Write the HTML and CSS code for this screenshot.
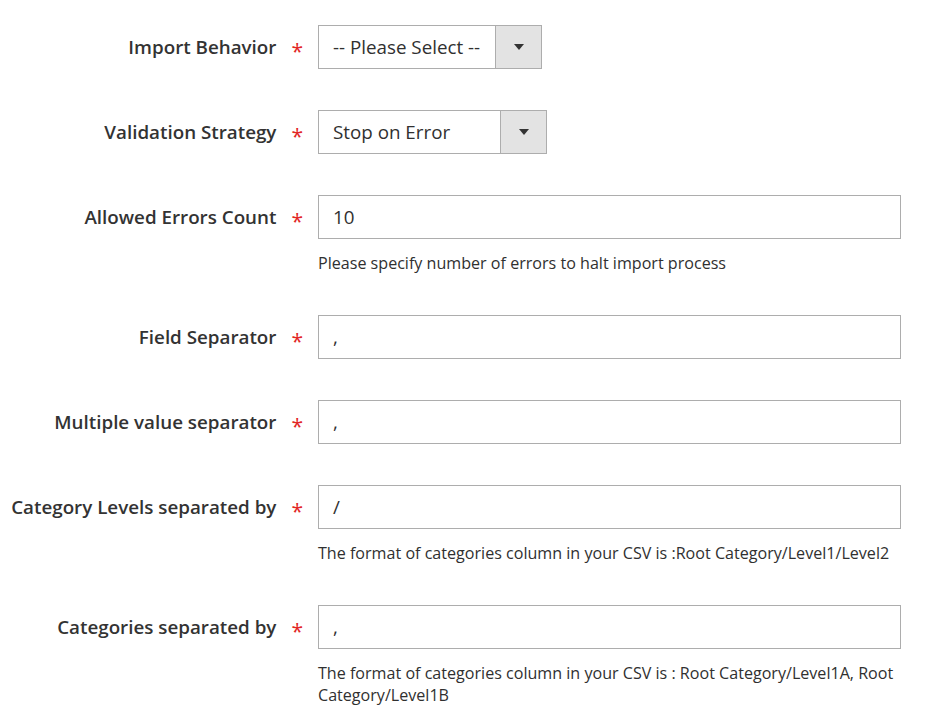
FILE: index.html
```html
<!DOCTYPE html>
<html>
<head>
<meta charset="utf-8">
<link rel="stylesheet" href="styles.css">
</head>
<body>
<form class="form">
  <div class="field">
    <div class="label"><span>Import Behavior</span></div>
    <div class="control">
      <div class="select sel-1"><span class="sel-text">-- Please Select --</span><span class="sel-arrow"></span></div>
    </div>
  </div>
  <div class="field">
    <div class="label"><span>Validation Strategy</span></div>
    <div class="control">
      <div class="select sel-2"><span class="sel-text">Stop on Error</span><span class="sel-arrow"></span></div>
    </div>
  </div>
  <div class="field">
    <div class="label"><span>Allowed Errors Count</span></div>
    <div class="control">
      <div class="input">10</div>
      <div class="note">Please specify number of errors to halt import process</div>
    </div>
  </div>
  <div class="field">
    <div class="label"><span>Field Separator</span></div>
    <div class="control">
      <div class="input">,</div>
    </div>
  </div>
  <div class="field">
    <div class="label"><span>Multiple value separator</span></div>
    <div class="control">
      <div class="input">,</div>
    </div>
  </div>
  <div class="field">
    <div class="label"><span>Category Levels separated by</span></div>
    <div class="control">
      <div class="input">/</div>
      <div class="note">The format of categories column in your CSV is :Root Category/Level1/Level2</div>
    </div>
  </div>
  <div class="field">
    <div class="label"><span>Categories separated by</span></div>
    <div class="control">
      <div class="input">,</div>
      <div class="note">The format of categories column in your CSV is : Root Category/Level1A, Root Category/Level1B</div>
    </div>
  </div>
</form>
</body>
</html>
```

FILE: styles.css
```css
* { box-sizing: border-box; }
html, body { margin: 0; padding: 0; background: #ffffff; }
body {
  font-family: "Open Sans", "Liberation Sans", sans-serif;
  color: #303030;
  width: 940px;
  height: 724px;
  overflow: hidden;
}
.form {
  display: flex;
  flex-direction: column;
  gap: 41px;
  padding-top: 25px;
}
.field {
  display: flex;
  align-items: flex-start;
}
.label {
  width: 318px;
  height: 44px;
  display: flex;
  align-items: center;
  justify-content: flex-end;
  padding-right: 15px;
  font-size: 18.8px;
  font-weight: 600;
  color: #333333;
  white-space: nowrap;
}
.label::after {
  content: "*";
  color: #e22626;
  font-size: 21px;
  font-weight: 400;
  margin-left: 15px;
  position: relative;
  top: 4px;
}
.control {
  width: 583px;
}
.input, .select {
  height: 44px;
  border: 1px solid #adadad;
  background: #fff;
  font-size: 18.8px;
  color: #303030;
  display: flex;
  align-items: center;
}
.input {
  padding-left: 14px;
}
.select {
  padding-left: 14px;
}
.sel-1 { width: 224px; }
.sel-2 { width: 229px; }
.sel-text { flex: 1; white-space: nowrap; }
.sel-arrow {
  width: 46px;
  height: 100%;
  background: #e3e3e3;
  border-left: 1px solid #adadad;
  display: flex;
  align-items: center;
  justify-content: center;
}
.sel-arrow::before {
  content: "";
  width: 0;
  height: 0;
  border-left: 5px solid transparent;
  border-right: 5px solid transparent;
  border-top: 6px solid #333;
}
.note {
  margin-top: 13px;
  font-size: 16.1px;
  line-height: 22px;
  color: #303030;
}
```
